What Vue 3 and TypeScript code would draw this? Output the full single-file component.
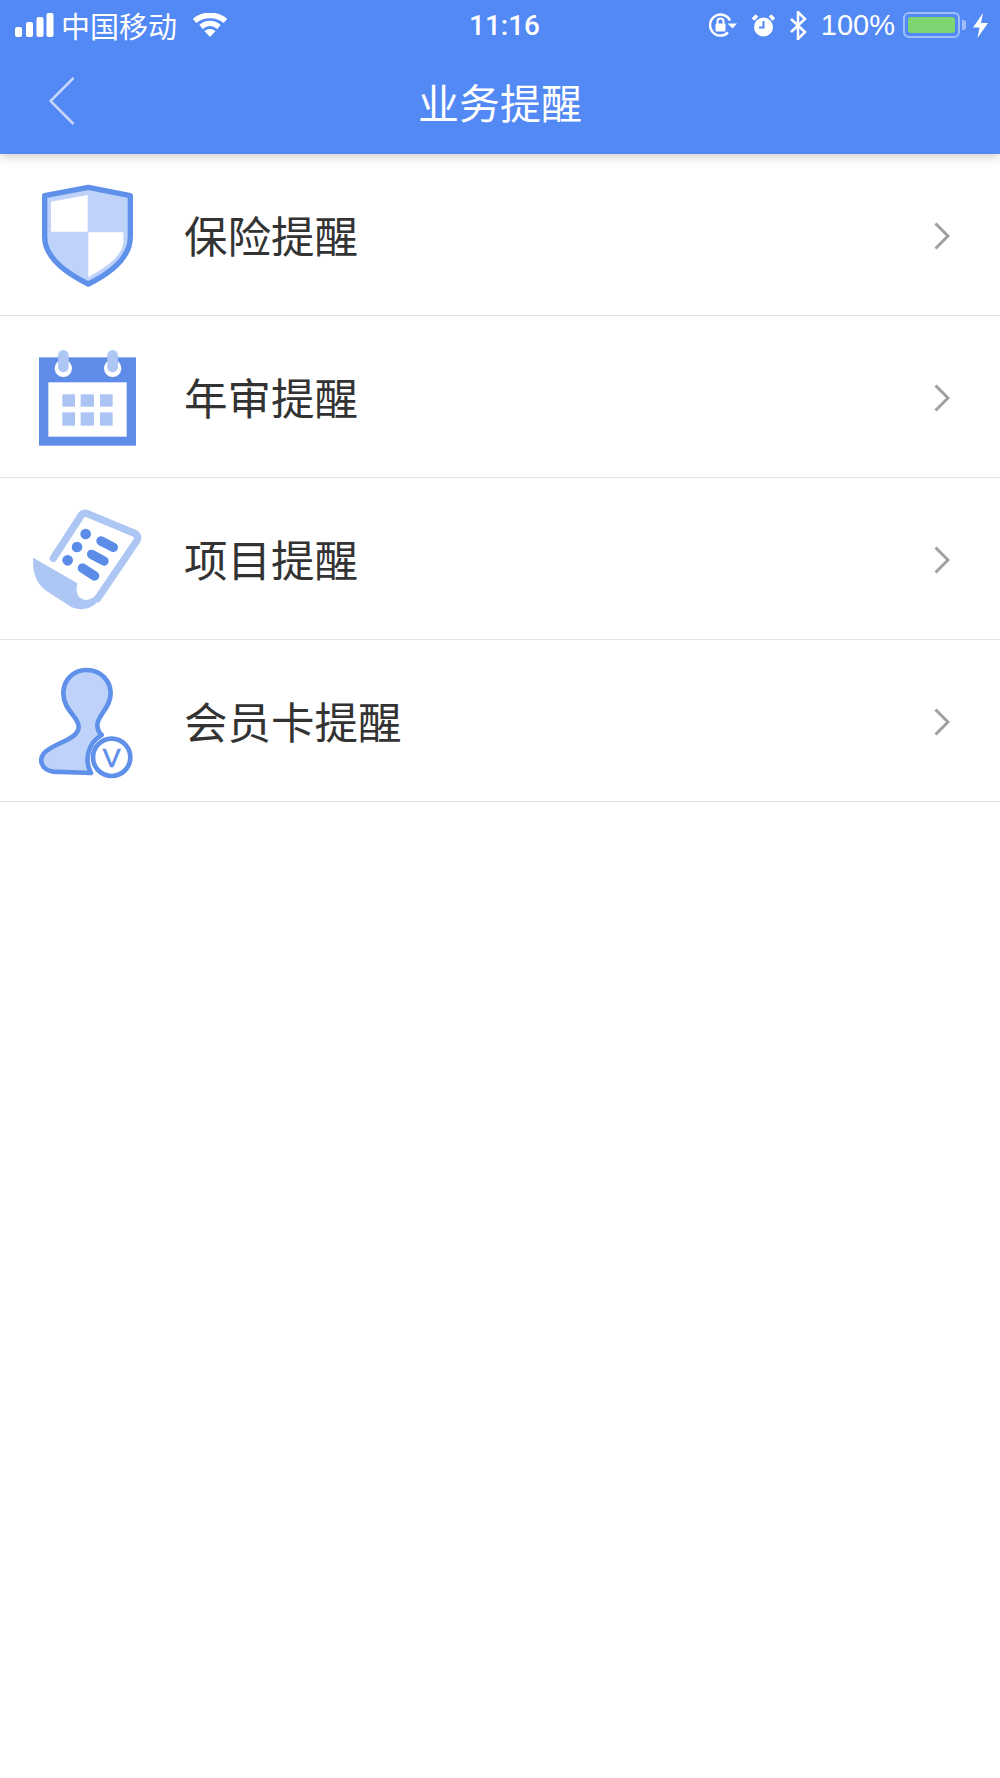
<template>
  <div class="page">
    <header class="top">
      <div class="status">
        <div class="status-left">
          <svg class="signal" width="39" height="24" viewBox="0 0 39 24">
            <rect x="0" y="14" width="7" height="10" rx="2" />
            <rect x="11" y="9" width="7" height="15" rx="2" />
            <rect x="21.500" y="4" width="7" height="20" rx="2" />
            <rect x="31.500" y="0" width="7" height="24" rx="2" />
          </svg>
          <span class="carrier">中国移动</span>
          <svg class="wifi" width="34" height="24" viewBox="0 0 34 24">
            <path d="M1.500 8C10 0.500 24 0.500 32.500 8" class="wifi-arc" />
            <path d="M8 13.800C13.500 9.500 20.500 9.500 26 13.800" class="wifi-arc" />
            <path d="M11.500 18.200C14.500 15.400 19.500 15.400 22.500 18.200L17 24Z" fill="#fff" />
          </svg>
        </div>
        <div class="time">11:16</div>
        <div class="status-right">
          <svg width="28" height="24" viewBox="0 0 28 24">
            <path d="M19 19.500A10.500 10.500 0 1 1 21 7.500" class="line" />
            <path d="M18.500 10.500H28L23.500 15.500Z" fill="#fff" />
            <rect x="6.500" y="10.500" width="10" height="8" rx="1" fill="#fff" />
            <path d="M8.500 11V8.500a3 3 0 0 1 6 0V11" class="line thin" />
          </svg>
          <svg width="23" height="23" viewBox="0 0 23 23">
            <circle cx="11.500" cy="13" r="9.500" fill="#fff" />
            <path d="M11.500 7v6.500H7" class="clock-hand" />
            <path d="M1 5.500L5 1.500M22 5.500L18 1.500" class="line ear" />
          </svg>
          <svg width="17" height="29" viewBox="0 0 17 29">
            <path d="M1 8l14 13-7 7V1l7 7L1 21" class="line" />
          </svg>
          <span class="percent">100%</span>
          <div class="battery">
            <div class="battery-body"><div class="battery-level"></div></div>
            <div class="battery-nub"></div>
          </div>
          <svg width="15" height="25" viewBox="0 0 15 25">
            <path d="M10 0L0 14.500H6.500L4.500 25L15 10H8Z" fill="#fff" />
          </svg>
        </div>
      </div>
      <div class="nav">
        <svg class="back" width="26" height="48" viewBox="0 0 26 48">
          <path d="M24.500 1L1.500 24L24.500 47" />
        </svg>
        <h1 class="title">业务提醒</h1>
        <span></span>
      </div>
    </header>

    <ul class="list">
      <li v-for="item in items" :key="item.key" class="row">
        <svg class="icon" width="120" height="131" viewBox="0 0 120 131">
          <g v-if="item.key === 'insurance'" transform="translate(-8 1) scale(0.3333)">
            <path
              d="M205 52L74 77V200C74 270 150 315 205 342C260 315 331 270 331 200V77Z"
              fill="#bfd3fa"
              stroke="#5f90ea"
              stroke-width="16"
              stroke-linejoin="round"
            />
            <path d="M93 95L203 75V185H93ZM205 187H310V215C305 265 250 295 205 322Z" fill="#fff" />
          </g>
          <g v-else-if="item.key === 'annual'" transform="translate(-8 4) scale(0.3333)">
            <rect x="57" y="67" width="291" height="265" fill="#5f8ce8" />
            <rect x="85" y="142" width="235" height="163" fill="#fff" />
            <circle cx="130" cy="100" r="26" fill="#fff" />
            <circle cx="278" cy="100" r="26" fill="#fff" />
            <rect x="114" y="45" width="32" height="67" rx="16" fill="#adc6f4" />
            <rect x="262" y="45" width="32" height="67" rx="16" fill="#adc6f4" />
            <g fill="#abc4f4">
              <rect x="127" y="178" width="38" height="37" />
              <rect x="182" y="178" width="40" height="37" />
              <rect x="240" y="178" width="38" height="37" />
              <rect x="127" y="232" width="38" height="40" />
              <rect x="182" y="232" width="40" height="40" />
              <rect x="240" y="232" width="38" height="40" />
            </g>
          </g>
          <g v-else-if="item.key === 'project'" transform="translate(-8 2) scale(0.3333)">
            <path
              d="M100 190L183 62Q190 52 202 56L342 114Q358 122 350 138L232 312"
              fill="none"
              stroke="#adc6f4"
              stroke-width="22"
              stroke-linecap="round"
            />
            <path
              d="M40 188L172 265Q164 298 182 310Q202 322 222 305L250 290L225 328Q195 352 155 337L75 285Q34 250 40 188Z"
              fill="#adc6f4"
            />
            <g fill="#5b8de8">
              <circle cx="197" cy="117" r="16" />
              <circle cx="171" cy="156" r="16" />
              <circle cx="143" cy="196" r="16" />
            </g>
            <g stroke="#5b8de8" stroke-width="28" stroke-linecap="round">
              <path d="M243 138L280 157" />
              <path d="M215 178L252 198" />
              <path d="M187 219L224 243" />
            </g>
          </g>
          <g v-else transform="translate(-8 0) scale(0.3333)">
            <path
              d="M200 45C245 45 272 80 272 115C272 160 232 180 232 210C232 222 236 232 245 240A85 85 0 0 0 213 354L100 350C65 345 55 315 72 295C95 265 176 255 176 215C176 185 130 165 130 115C130 75 160 45 200 45Z"
              fill="#bfd3fa"
              stroke="#5f90ea"
              stroke-width="14"
              stroke-linejoin="round"
            />
            <circle cx="275" cy="307" r="56" fill="#fff" stroke="#5f90ea" stroke-width="14" />
            <text x="275" y="336" class="badge-letter" text-anchor="middle">V</text>
          </g>
        </svg>
        <span class="label">{{ item.label }}</span>
        <svg class="chevron" width="16" height="28" viewBox="0 0 16 28">
          <path d="M1.500 1.500L14 14L1.500 26.500" />
        </svg>
      </li>
    </ul>
  </div>
</template>

<script setup lang="ts">
interface IReminder {
  key: string;
  label: string;
}

const items: Array<IReminder> = [
  { key: "insurance", label: "保险提醒" },
  { key: "annual", label: "年审提醒" },
  { key: "project", label: "项目提醒" },
  { key: "member", label: "会员卡提醒" },
];
</script>

<style scoped>
.page {
  min-height: 1778px;
  background: #fff;
  font-family: "Liberation Sans", "Noto Sans CJK SC", sans-serif;
}

.top {
  position: relative;
  height: 154px;
  background: #5389f5;
  color: #fff;
  box-shadow: 0 2px 10px rgba(0, 0, 0, 0.22);
}

.status {
  display: grid;
  grid-template-columns: 1fr auto 1fr;
  align-items: center;
  height: 50px;
  padding: 0 12px 0 15px;
}

.status-left,
.status-right {
  display: flex;
  align-items: center;
}

.status-right {
  justify-content: flex-end;
}

.signal {
  fill: #fff;
}

.carrier {
  margin-left: 7px;
  font-size: 29px;
}

.wifi {
  margin-left: 16px;
}

.wifi-arc {
  fill: none;
  stroke: #fff;
  stroke-width: 5.5;
}

.time {
  padding-left: 6px;
  font-family: Roboto, "Liberation Sans", sans-serif;
  font-size: 28px;
  font-weight: 500;
}

.line {
  fill: none;
  stroke: #fff;
  stroke-width: 2.5;
}

.thin {
  stroke-width: 2;
}

.ear {
  stroke-width: 3.5;
}

.clock-hand {
  fill: none;
  stroke: #5389f5;
  stroke-width: 2;
}

.status-right svg + svg {
  margin-left: 15px;
}

.percent {
  margin-left: 14px;
  font-size: 29px;
}

.battery {
  display: flex;
  align-items: center;
  margin: 0 7px 0 8px;
}

.battery-body {
  width: 57px;
  height: 26px;
  padding: 3px;
  box-sizing: border-box;
  border: 2px solid rgba(255, 255, 255, 0.45);
  border-radius: 6px;
}

.battery-level {
  height: 100%;
  background: #7bd672;
  border-radius: 3px;
}

.battery-nub {
  width: 4px;
  height: 10px;
  margin-left: 2px;
  background: rgba(255, 255, 255, 0.45);
  border-radius: 0 3px 3px 0;
}

.nav {
  display: grid;
  grid-template-columns: 1fr auto 1fr;
  align-items: center;
  height: 104px;
  padding-left: 49px;
}

.back {
  margin-top: -2px;
}

.back path {
  fill: none;
  stroke: #c5d7fb;
  stroke-width: 2.5;
}

.title {
  margin: -2px 0 0 -49px;
  font-size: 41px;
  font-weight: 400;
}

.list {
  margin: 0;
  padding: 0;
  list-style: none;
}

.row {
  display: flex;
  align-items: center;
  height: 162px;
  box-sizing: border-box;
  padding: 0 50px 0 28px;
  border-bottom: 1px solid #e2e2e2;
}

.icon {
  flex: none;
}

.label {
  flex: 1;
  margin-left: 36px;
  font-size: 43.5px;
  color: #333;
}

.chevron {
  margin-top: 3px;
}

.chevron path {
  fill: none;
  stroke: #a0a0a0;
  stroke-width: 3;
}

.badge-letter {
  font-size: 80px;
  fill: #5f90ea;
  stroke: #5f90ea;
  stroke-width: 2;
}
</style>
